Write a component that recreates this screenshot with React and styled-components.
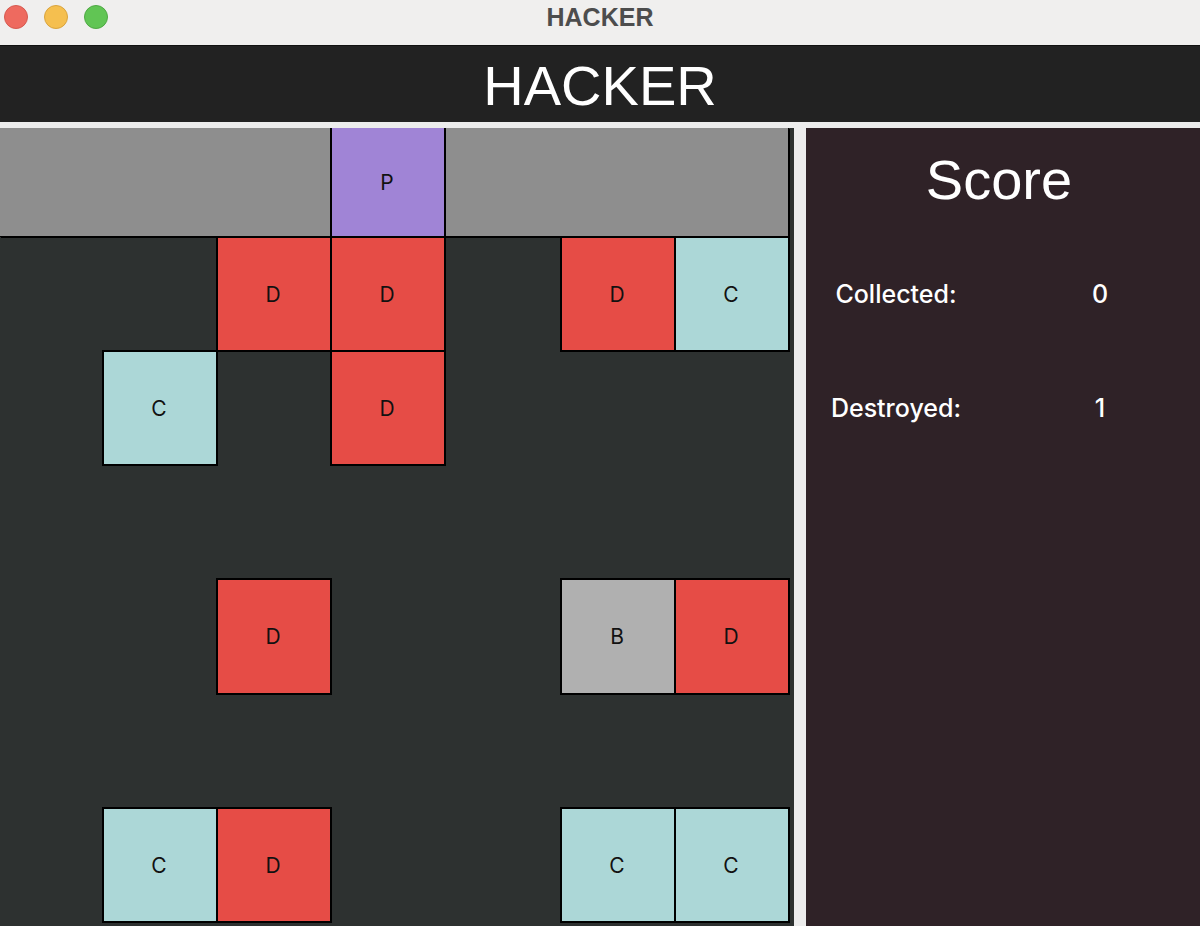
import React from "react";
import styled, { createGlobalStyle } from "styled-components";

const GlobalStyle = createGlobalStyle`
  body {
    margin: 0;
    background: #ececec;
    font-family: "Liberation Sans", Arial, sans-serif;
  }
`;

const Window = styled.div`
  width: 1200px;
  height: 926px;
  display: flex;
  flex-direction: column;
  overflow: hidden;
  background: #ececec;
`;

const TitleBar = styled.div`
  height: 45px;
  border-bottom: 1px solid #111;
  background: #f0efee;
  display: flex;
  align-items: center;
  position: relative;
`;

const Lights = styled.div`
  display: flex;
  gap: 16px;
  padding-left: 4px;
  margin-top: -11px;
`;

const Light = styled.span`
  width: 24px;
  height: 24px;
  border-radius: 50%;
  box-sizing: border-box;
  background: ${(p) => p.$color};
  border: 1px solid ${(p) => p.$edge};
`;

const WindowTitle = styled.div`
  position: absolute;
  left: 0;
  right: 0;
  top: 3px;
  text-align: center;
  font-weight: bold;
  font-size: 25px;
  color: #4d4d4d;
`;

const Header = styled.header`
  height: 76px;
  background: #222222;
  color: #fff;
  display: flex;
  align-items: center;
  justify-content: center;
  font-size: 56px;
  padding-top: 2px;
  box-sizing: border-box;
`;

const Main = styled.main`
  flex: 1;
  display: flex;
  gap: 12px;
  padding-top: 6px;
`;

const Board = styled.div`
  width: 794px;
  flex-shrink: 0;
  background: #2d3130;
  display: grid;
  grid-template-columns: 103px 114px 114px 114px 116px 114px 114px;
  grid-template-rows: 109px 114px 114px 114px 115px 114px 114px;
  align-content: start;
`;

const Lane = styled.div`
  grid-row: 1;
  grid-column: 1 / -1;
  background: #8e8e8e;
  box-shadow: 1px 1px 0 0 #000, inset -1px -1px 0 0 #000;
`;

const colors = {
  P: "#a084d6",
  D: "#e64c46",
  C: "#acd7d7",
  B: "#b0b0b0",
};

const Cell = styled.div`
  grid-row: ${(p) => p.$row + 1};
  grid-column: ${(p) => p.$col + 1};
  background: ${(p) => colors[p.$kind]};
  display: flex;
  align-items: center;
  justify-content: center;
  padding-right: 2px;
  font-family: Inter, "Liberation Sans", sans-serif;
  font-size: 21px;
  color: #111;
  outline: 2px solid #000;
  outline-offset: -1px;
  z-index: 1;
`;

const PlayerCell = styled(Cell)`
  outline: none;
  box-shadow: -1px 0 0 0 #000, 1px 0 0 0 #000, inset 1px 0 0 0 #000,
    inset -1px 0 0 0 #000, inset 0 -1px 0 0 #000;
`;

const Panel = styled.aside`
  flex: 1;
  background: #2f2227;
  color: #fff;
  display: grid;
  grid-template-columns: 180px 1fr;
  grid-template-rows: 109px 114px 114px;
  align-content: start;
`;

const PanelTitle = styled.h2`
  grid-column: 1 / -1;
  margin: 0;
  font-weight: normal;
  font-size: 56px;
  display: flex;
  align-items: center;
  justify-content: center;
  padding: 0 8px 6px 0;
`;

const StatLabel = styled.div`
  display: flex;
  align-items: center;
  justify-content: center;
  font-family: Inter, "Liberation Sans", sans-serif;
  font-weight: 500;
  font-size: 25px;
`;

const StatValue = styled(StatLabel)`
  padding-left: 14px;
`;

const cells = [
  { row: 1, col: 2, kind: "D" },
  { row: 1, col: 3, kind: "D" },
  { row: 1, col: 5, kind: "D" },
  { row: 1, col: 6, kind: "C" },
  { row: 2, col: 1, kind: "C" },
  { row: 2, col: 3, kind: "D" },
  { row: 4, col: 2, kind: "D" },
  { row: 4, col: 5, kind: "B" },
  { row: 4, col: 6, kind: "D" },
  { row: 6, col: 1, kind: "C" },
  { row: 6, col: 2, kind: "D" },
  { row: 6, col: 5, kind: "C" },
  { row: 6, col: 6, kind: "C" },
];

const App = () => {
  return (
    <Window>
      <GlobalStyle />
      <TitleBar>
        <Lights>
          <Light $color="#ee6a5f" $edge="#d65a50" />
          <Light $color="#f5bf4f" $edge="#d9a43e" />
          <Light $color="#61c554" $edge="#4fa944" />
        </Lights>
        <WindowTitle>HACKER</WindowTitle>
      </TitleBar>
      <Header>HACKER</Header>
      <Main>
        <Board>
          <Lane />
          <PlayerCell $row={0} $col={3} $kind="P">
            P
          </PlayerCell>
          {cells.map((c, i) => (
            <Cell key={i} $row={c.row} $col={c.col} $kind={c.kind}>
              {c.kind}
            </Cell>
          ))}
        </Board>
        <Panel>
          <PanelTitle>Score</PanelTitle>
          <StatLabel>Collected:</StatLabel>
          <StatValue>0</StatValue>
          <StatLabel>Destroyed:</StatLabel>
          <StatValue>1</StatValue>
        </Panel>
      </Main>
    </Window>
  );
};

export default App;
